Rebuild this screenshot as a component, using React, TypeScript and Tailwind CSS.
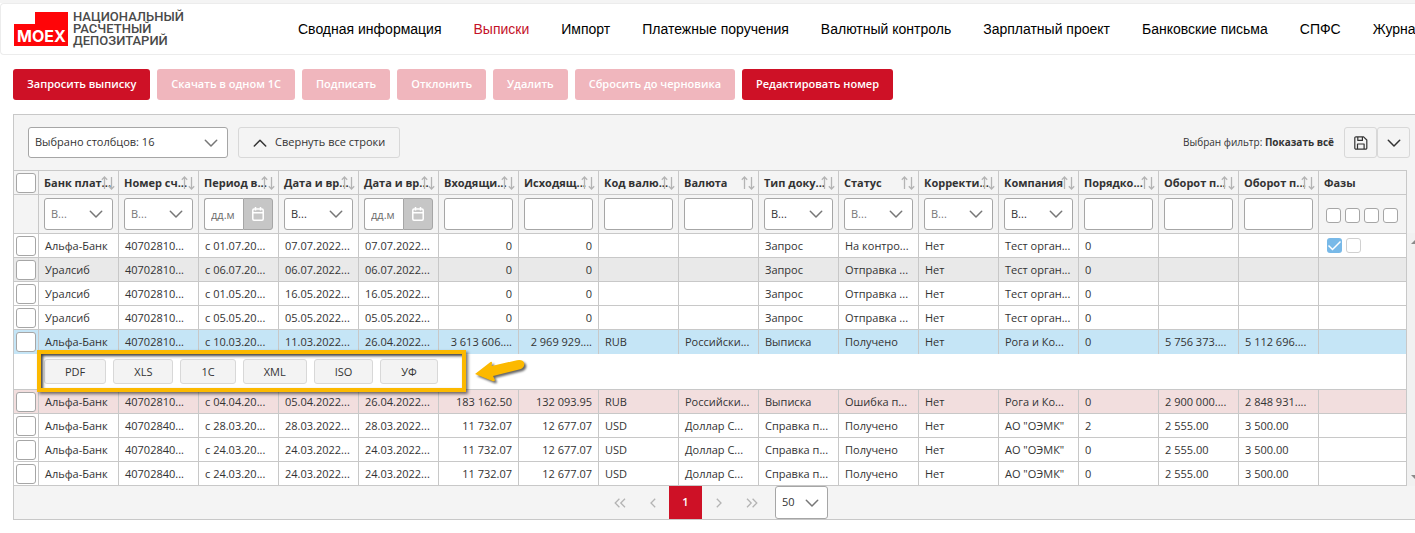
import React from "react";

type FilterKind = "select" | "date" | "text";

interface Column {
  title: string;
  filter: FilterKind;
  strong?: boolean;
  right?: boolean;
}

const columns: Column[] = [
  { title: "Банк плат...", filter: "select" },
  { title: "Номер сч...", filter: "select" },
  { title: "Период в...", filter: "date" },
  { title: "Дата и вр...", filter: "select", strong: true },
  { title: "Дата и вр...", filter: "date" },
  { title: "Входящи...", filter: "text", right: true },
  { title: "Исходящ...", filter: "text", right: true },
  { title: "Код валю...", filter: "text" },
  { title: "Валюта", filter: "text" },
  { title: "Тип доку...", filter: "select", strong: true },
  { title: "Статус", filter: "select" },
  { title: "Корректи...", filter: "select" },
  { title: "Компания", filter: "select", strong: true },
  { title: "Порядко...", filter: "text" },
  { title: "Оборот п...", filter: "text" },
  { title: "Оборот п...", filter: "text" },
];

interface Row {
  tone: string;
  cells: string[];
  expanded?: boolean;
  phases?: boolean;
}

const rows: Row[] = [
  { tone: "bg-white", phases: true, cells: ["Альфа-Банк", "40702810...", "с 01.07.20...", "07.07.2022...", "07.07.2022...", "0", "0", "", "", "Запрос", "На контро...", "Нет", "Тест орган...", "0", "", ""] },
  { tone: "bg-[#e9e9e9]", cells: ["Уралсиб", "40702810...", "с 06.07.20...", "06.07.2022...", "06.07.2022...", "0", "0", "", "", "Запрос", "Отправка ...", "Нет", "Тест орган...", "0", "", ""] },
  { tone: "bg-white", cells: ["Уралсиб", "40702810...", "с 01.05.20...", "16.05.2022...", "16.05.2022...", "0", "0", "", "", "Запрос", "Отправка ...", "Нет", "Тест орган...", "0", "", ""] },
  { tone: "bg-white", cells: ["Уралсиб", "40702810...", "с 05.05.20...", "05.05.2022...", "05.05.2022...", "0", "0", "", "", "Запрос", "Отправка ...", "Нет", "Тест орган...", "0", "", ""] },
  { tone: "bg-[#c5e5f6]", expanded: true, cells: ["Альфа-Банк", "40702810...", "с 10.03.20...", "11.03.2022...", "26.04.2022...", "3 613 606....", "2 969 929....", "RUB", "Российски...", "Выписка", "Получено", "Нет", "Рога и Ко...", "0", "5 756 373....", "5 112 696...."] },
  { tone: "bg-[#f2dede]", cells: ["Альфа-Банк", "40702810...", "с 04.04.20...", "05.04.2022...", "26.04.2022...", "183 162.50", "132 093.95", "RUB", "Российски...", "Выписка", "Ошибка п...", "Нет", "Рога и Ко...", "0", "2 900 000....", "2 848 931...."] },
  { tone: "bg-white", cells: ["Альфа-Банк", "40702840...", "с 28.03.20...", "28.03.2022...", "28.03.2022...", "11 732.07", "12 677.07", "USD", "Доллар С...", "Справка п...", "Получено", "Нет", "АО \"ОЭМК\"", "2", "2 555.00", "3 500.00"] },
  { tone: "bg-white", cells: ["Альфа-Банк", "40702840...", "с 24.03.20...", "24.03.2022...", "24.03.2022...", "11 732.07", "12 677.07", "USD", "Доллар С...", "Справка п...", "Получено", "Нет", "АО \"ОЭМК\"", "0", "2 555.00", "3 500.00"] },
  { tone: "bg-white", cells: ["Альфа-Банк", "40702840...", "с 24.03.20...", "24.03.2022...", "24.03.2022...", "11 732.07", "12 677.07", "USD", "Доллар С...", "Справка п...", "Получено", "Нет", "АО \"ОЭМК\"", "0", "2 555.00", "3 500.00"] },
];

const navItems = [
  "Сводная информация",
  "Выписки",
  "Импорт",
  "Платежные поручения",
  "Валютный контроль",
  "Зарплатный проект",
  "Банковские письма",
  "СПФС",
  "Журналы",
];

const actions = [
  { label: "Запросить выписку", enabled: true },
  { label: "Скачать в одном 1С", enabled: false },
  { label: "Подписать", enabled: false },
  { label: "Отклонить", enabled: false },
  { label: "Удалить", enabled: false },
  { label: "Сбросить до черновика", enabled: false },
  { label: "Редактировать номер", enabled: true },
];

const exportFormats = ["PDF", "XLS", "1C", "XML", "ISO", "УФ"];

function Chevron({ up = false, className = "" }: { up?: boolean; className?: string }) {
  return (
    <svg viewBox="0 0 14 14" className={`h-[14px] w-[14px] ${className}`} fill="none" stroke="currentColor" strokeWidth="1.5" strokeLinecap="round" strokeLinejoin="round" aria-hidden="true">
      <path d={up ? "M1.3 10 7 4.3 12.7 10" : "M1.3 4.3 7 10 12.7 4.3"} />
    </svg>
  );
}

function SortIcon() {
  return (
    <svg viewBox="0 0 14 14" className="absolute top-[5px] right-[3px] h-[14px] w-[14px] text-[#b4b4b4]" fill="none" stroke="currentColor" strokeWidth="1.3" aria-hidden="true">
      <path d="M3.5 13V1M.8 3.7 3.5 1l2.7 2.7M10.5 1v12M7.8 10.3l2.7 2.7 2.7-2.7" />
    </svg>
  );
}

function CalendarIcon() {
  return (
    <svg viewBox="0 0 14 16" className="h-[16px] w-[14px]" fill="none" stroke="currentColor" strokeWidth="1.5" aria-hidden="true">
      <rect x="1.8" y="3" width="10.4" height="11.2" rx="1.2" />
      <path d="M1.800 6.800h10.400M4.500 1v3.600M9.500 1v3.600" />
    </svg>
  );
}

function SaveIcon() {
  return (
    <svg viewBox="0 0 14 14" className="h-[14px] w-[14px]" fill="none" stroke="currentColor" strokeWidth="1.2" strokeLinejoin="round" aria-hidden="true">
      <path d="M2 .8h7.600l3.200 3.200V12a1.200 1.200 0 0 1-1.200 1.200H2A1.200 1.200 0 0 1 .8 12V2A1.200 1.200 0 0 1 2 .8Z" />
      <path d="M3.500 13V8h6.600v5M3.800 1v3.400h4.600V1" />
    </svg>
  );
}

function PageArrow({ double = false, flip = false }: { double?: boolean; flip?: boolean }) {
  return (
    <svg viewBox="0 0 12 12" className={`h-[12px] w-[12px] ${flip ? "-scale-x-100" : ""}`} fill="none" stroke="currentColor" strokeWidth="1.3" aria-hidden="true">
      <path d={double ? "M5.400 1.800 1.200 6l4.200 4.200M11 1.800 6.800 6 11 10.200" : "M8.200 1.800 4 6l4.200 4.200"} />
    </svg>
  );
}

function RowCheck({ label }: { label: string }) {
  return (
    <input
      type="checkbox"
      aria-label={label}
      className="ml-[2px] block h-[20px] w-[20px] appearance-none rounded-[3px] border border-[#a6a6a6] bg-white"
    />
  );
}

function PhaseCheck({ label, soft = false }: { label: string; soft?: boolean }) {
  return (
    <input
      type="checkbox"
      aria-label={label}
      className={`block h-[15px] w-[15px] appearance-none rounded-[3px] border bg-white ${soft ? "border-[#d0d0d0]" : "border-[#a6a6a6]"}`}
    />
  );
}

function Filter({ column }: { column: Column }) {
  if (column.filter === "select") {
    return (
      <div className="relative w-[69px]">
        <select
          aria-label={column.title}
          className={`block h-[32px] w-full appearance-none rounded-[3px] border border-[#a6a6a6] bg-white pl-[6px] text-[11px] ${column.strong ? "text-[#333]" : "text-[#777]"}`}
        >
          <option>В...</option>
        </select>
        <Chevron className="pointer-events-none absolute top-[9px] right-[10px] text-[#777]" />
      </div>
    );
  }
  if (column.filter === "date") {
    return (
      <div className="flex h-[32px] w-[69px]">
        <input
          aria-label={column.title}
          placeholder="дд.м"
          className="h-full w-[39px] rounded-l-[3px] border border-r-0 border-[#a6a6a6] bg-white pl-[6px] text-[11px] placeholder:text-[#6b6b6b]"
        />
        <button aria-label="Календарь" className="flex flex-1 items-center justify-center rounded-r-[3px] border border-[#a6a6a6] bg-[#c6c6c6] text-white">
          <CalendarIcon />
        </button>
      </div>
    );
  }
  return (
    <input
      aria-label={column.title}
      className="block h-[32px] w-[69px] rounded-[3px] border border-[#a6a6a6] bg-white px-[6px] text-[11px]"
    />
  );
}

function Logo() {
  return (
    <a href="#" className="flex w-[284px] shrink-0 items-center pl-[13px]">
      <svg viewBox="0 0 54 34" className="h-[34px] w-[54px] shrink-0" role="img" aria-label="MOEX">
        <path fill="#ff0508" d="M21 0h33v34H0V12h21z" />
        <text x="27.5" y="29.5" textAnchor="middle" fill="#fff" fontFamily="Inter, sans-serif" fontWeight="700" fontSize="16">MOEX</text>
      </svg>
      <span className="ml-[5px] font-['Roboto',sans-serif] text-[13px] leading-[12px] font-medium text-[#4a4a4a]">
        НАЦИОНАЛЬНЫЙ
        <br />
        РАСЧЕТНЫЙ
        <br />
        ДЕПОЗИТАРИЙ
      </span>
    </a>
  );
}

function ExportStrip() {
  return (
    <div className="relative flex h-full items-center gap-[7px] pl-[5px]">
      {exportFormats.map((name) => (
        <button key={name} className="h-[25px] rounded-[3px] border border-[#d8d8d8] bg-[#f3f3f3] px-[20px] text-[11px] leading-[16px] text-[#333]">
          {name}
        </button>
      ))}
      <div className="pointer-events-none absolute -top-[4px] -left-[2px] h-[42px] w-[429px] border-[4px] border-[#fcb900] shadow-[2px_2px_3px_rgba(0,0,0,0.55),inset_2px_2px_3px_rgba(0,0,0,0.75)]" />
      <svg viewBox="0 0 54 28" className="pointer-events-none absolute top-[4px] left-[435px] h-[28px] w-[54px] drop-shadow-[2px_2px_1px_rgba(0,0,0,0.6)]" aria-hidden="true">
        <path fill="#fcb900" d="M1 16 16.500 4q1.800-.6 1.500 1.200L17.600 8 43 2.200q6-1 7.200 3 .6 4.400-4.200 6L19 18l1.800 3.600q.4 2-1.800 1.600Z" />
      </svg>
    </div>
  );
}

export default function App() {
  return (
    <div className="overflow-x-hidden bg-white font-['Open_Sans','Noto_Sans',sans-serif] text-[#333]">
      <div className="h-[3px] bg-[#f4f4f4]" />
      <header className="flex h-[52px] overflow-hidden rounded-l-[4px] border-y border-l border-[#ececec] bg-white">
        <Logo />
        <nav className="flex items-center gap-[32px] pl-[13px] font-['Liberation_Sans',Arial,sans-serif] text-[14px] whitespace-nowrap">
          {navItems.map((item) => (
            <a key={item} href="#" className={item === "Выписки" ? "text-[#c41228]" : "text-black"}>
              {item}
            </a>
          ))}
        </nav>
      </header>

      <main className="pl-[13px]">
        <div className="flex gap-[7px] pt-[14px] pb-[14px]">
          {actions.map(({ label, enabled }) => (
            <button
              key={label}
              disabled={!enabled}
              className={`h-[31px] rounded-[3px] px-[14px] text-[11px] font-semibold whitespace-nowrap text-white ${enabled ? "bg-[#ce1126]" : "bg-[#f0b6bd]"}`}
            >
              {label}
            </button>
          ))}
        </div>

        <section className="border-y border-l border-[#c8c8c8] bg-[#f4f4f4]">
          <div className="flex items-center py-[12px] pr-[5px] pl-[14px]">
            <div className="relative w-[200px]">
              <select aria-label="Столбцы" className="block h-[31px] w-full appearance-none rounded-[3px] border border-[#a6a6a6] bg-white pl-[6px] text-[11px] text-[#333]">
                <option>Выбрано столбцов: 16</option>
              </select>
              <Chevron className="pointer-events-none absolute top-[9px] right-[10px] text-[#777]" />
            </div>
            <button className="ml-[10px] flex h-[31px] items-center gap-[8px] rounded-[3px] border border-[#d8d8d8] bg-[#f4f4f4] px-[14px] text-[11px] whitespace-nowrap">
              <Chevron up />
              Свернуть все строки
            </button>
            <span className="ml-auto text-[10px] whitespace-nowrap">
              Выбран фильтр: <b>Показать всё</b>
            </span>
            <button aria-label="Сохранить фильтр" className="ml-[10px] flex h-[31px] w-[33px] items-center justify-center rounded-[3px] border border-[#d8d8d8]">
              <SaveIcon />
            </button>
            <button aria-label="Выбрать фильтр" className="flex h-[31px] w-[33px] items-center justify-center rounded-[3px] border border-[#d8d8d8]">
              <Chevron />
            </button>
          </div>

          <div className="flex">
            <table className="w-full min-w-[1393px] table-fixed border-separate border-spacing-0 border-t border-[#c8c8c8] text-[11px] leading-[16px]">
              <colgroup>
                <col className="w-[25px]" />
                {columns.map((_, i) => (
                  <col key={i} className="w-[80px]" />
                ))}
                <col />
              </colgroup>
              <thead>
                <tr className="h-[24px]">
                  <th className="border-r border-b border-[#c8c8c8] p-0">
                    <RowCheck label="Выбрать все" />
                  </th>
                  {columns.map((column, i) => (
                    <th key={i} className="relative border-r border-b border-[#c8c8c8] p-0 pl-[5px] text-left font-bold whitespace-nowrap">
                      {column.title}
                      <SortIcon />
                    </th>
                  ))}
                  <th className="border-r border-b border-[#c8c8c8] p-0 pl-[5px] text-left font-bold">Фазы</th>
                </tr>
                <tr className="h-[39px]">
                  <td className="border-r border-b border-[#c8c8c8] p-0" />
                  {columns.map((column, i) => (
                    <td key={i} className="border-r border-b border-[#c8c8c8] p-0 pl-[5px]">
                      <Filter column={column} />
                    </td>
                  ))}
                  <td className="border-r border-b border-[#c8c8c8] p-0 pt-[2px] pl-[7px]">
                    <div className="flex gap-[4px]">
                      {[1, 2, 3, 4].map((n) => (
                        <PhaseCheck key={n} label={`Фаза ${n}`} />
                      ))}
                    </div>
                  </td>
                </tr>
              </thead>
              <tbody>
                {rows.map((row, r) => {
                  const edge = row.expanded ? "border-r border-[#c8c8c8]" : "border-r border-b border-[#c8c8c8]";
                  return (
                    <React.Fragment key={r}>
                      <tr className={`h-[24px] ${row.tone}`}>
                        <td className={`${edge} p-0`}>
                          <RowCheck label={`Выбрать строку ${r + 1}`} />
                        </td>
                        {row.cells.map((cell, c) => (
                          <td key={c} className={`${edge} overflow-hidden p-0 px-[6px] whitespace-nowrap ${columns[c].right ? "text-right" : ""}`}>
                            {cell}
                          </td>
                        ))}
                        <td className={`${edge} p-0 pl-[8px]`}>
                          {row.phases && (
                            <div className="flex gap-[4px]">
                              <span className="relative block h-[15px] w-[15px]">
                                <input type="checkbox" defaultChecked aria-label="Фаза 1 пройдена" className="block h-[15px] w-[15px] appearance-none rounded-[3px] bg-[#78b9e8]" />
                                <svg viewBox="0 0 15 15" className="pointer-events-none absolute inset-0" fill="none" stroke="#fff" strokeWidth="1.5" aria-hidden="true">
                                  <path d="m1.500 7.500 4 4L13.500 3.500" />
                                </svg>
                              </span>
                              <PhaseCheck label="Фаза 2 пройдена" soft />
                            </div>
                          )}
                        </td>
                      </tr>
                      {row.expanded && (
                        <tr className="h-[36px] bg-white">
                          <td className="border-b border-[#c8c8c8] p-0" />
                          <td colSpan={17} className="h-[36px] border-r border-b border-[#c8c8c8] p-0">
                            <ExportStrip />
                          </td>
                        </tr>
                      )}
                    </React.Fragment>
                  );
                })}
              </tbody>
            </table>
            <div className="w-[8px] shrink-0 pt-[63px]">
              <div className="flex h-full flex-col items-end justify-between overflow-hidden bg-[#f1f1f1] py-[7px]">
                <svg viewBox="0 0 4 4" className="h-[4px] w-[4px]" aria-hidden="true">
                  <path fill="#8a8a8a" d="M4 0v4H0z" />
                </svg>
                <svg viewBox="0 0 4 4" className="h-[4px] w-[4px]" aria-hidden="true">
                  <path fill="#8a8a8a" d="M4 4V0H0z" />
                </svg>
              </div>
            </div>
          </div>

          <div className="flex h-[33px] items-center justify-center pl-[2px] text-[11px] text-[#b4b4b4]">
            <button aria-label="Первая страница" className="flex h-full w-[33px] items-center justify-center"><PageArrow double /></button>
            <button aria-label="Предыдущая страница" className="flex h-full w-[33px] items-center justify-center"><PageArrow /></button>
            <button className="h-full w-[33px] bg-[#ce1126] font-semibold text-white">1</button>
            <button aria-label="Следующая страница" className="flex h-full w-[33px] items-center justify-center"><PageArrow flip /></button>
            <button aria-label="Последняя страница" className="flex h-full w-[33px] items-center justify-center"><PageArrow double flip /></button>
            <div className="relative ml-[7px] w-[53px]">
              <select aria-label="Строк на странице" className="block h-[33px] w-full appearance-none rounded-[3px] border border-[#a6a6a6] bg-white pl-[6px] text-[11px] text-[#333]">
                <option>50</option>
              </select>
              <Chevron className="pointer-events-none absolute top-[10px] right-[9px] text-[#777]" />
            </div>
          </div>
        </section>
      </main>
    </div>
  );
}
